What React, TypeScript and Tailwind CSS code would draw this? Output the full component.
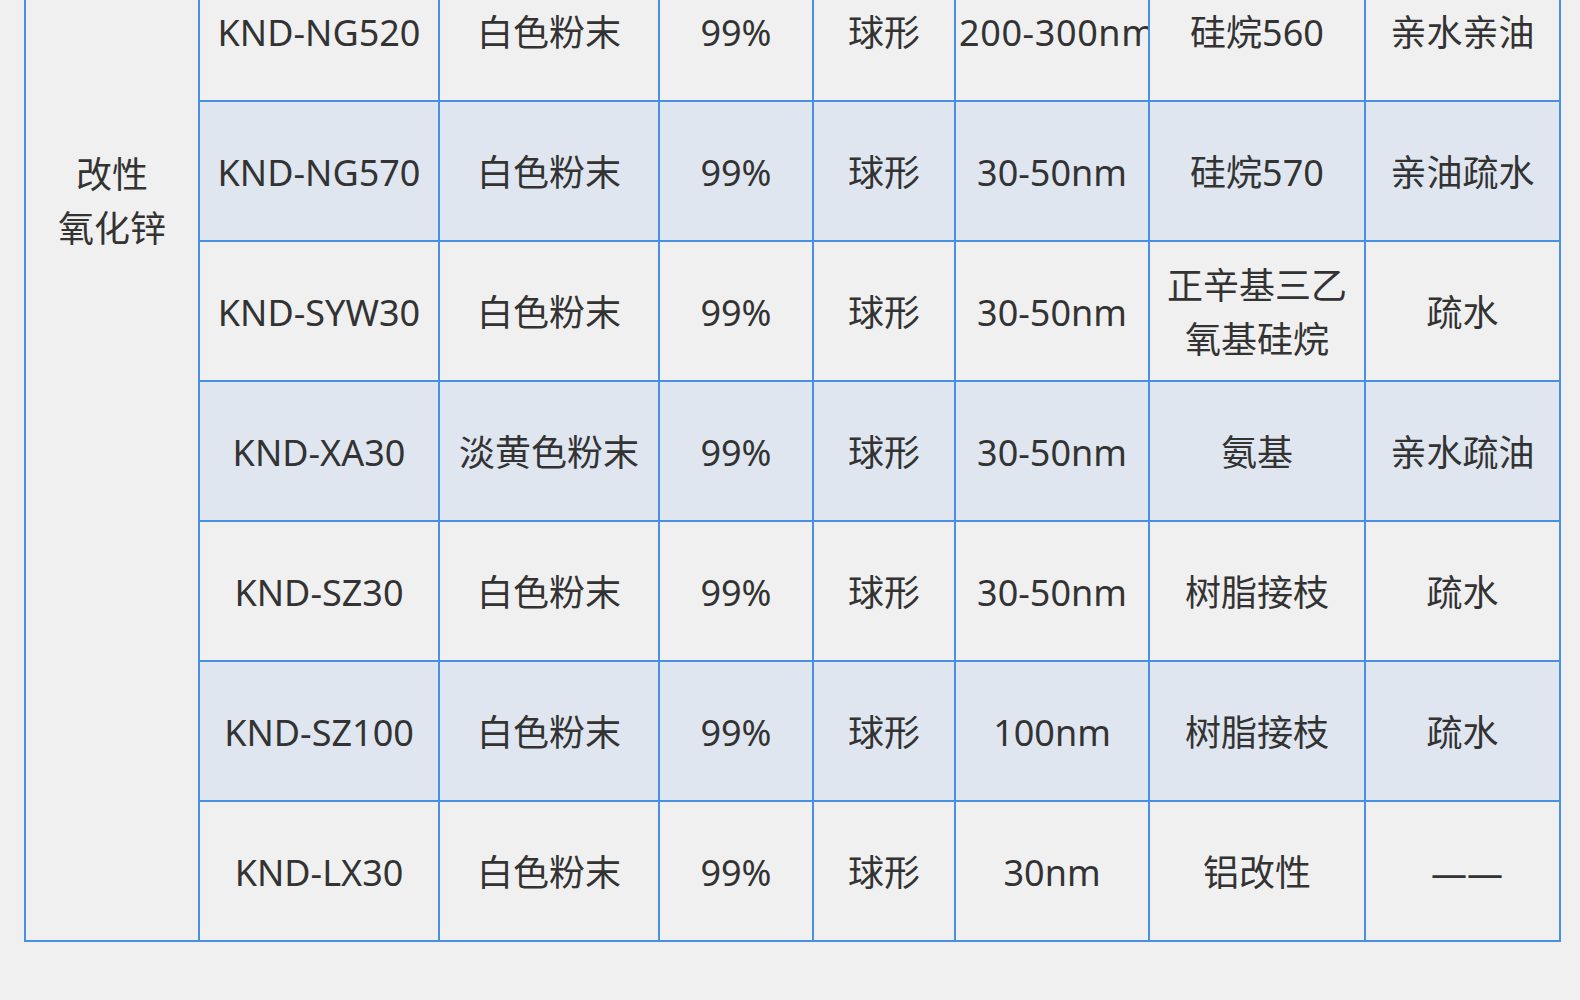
const rows = [
  ["KND-NG520", "白色粉末", "99%", "球形", "200-300nm", "硅烷560", "亲水亲油"],
  ["KND-NG570", "白色粉末", "99%", "球形", "30-50nm", "硅烷570", "亲油疏水"],
  ["KND-SYW30", "白色粉末", "99%", "球形", "30-50nm", "正辛基三乙氧基硅烷", "疏水"],
  ["KND-XA30", "淡黄色粉末", "99%", "球形", "30-50nm", "氨基", "亲水疏油"],
  ["KND-SZ30", "白色粉末", "99%", "球形", "30-50nm", "树脂接枝", "疏水"],
  ["KND-SZ100", "白色粉末", "99%", "球形", "100nm", "树脂接枝", "疏水"],
  ["KND-LX30", "白色粉末", "99%", "球形", "30nm", "铝改性", "——"],
];

const App = () => {
  return (
    <div
      className="min-h-screen bg-[#f0f0f0] overflow-hidden text-[#333] text-[36px] leading-[54px]"
      style={{ fontFamily: '"Noto Sans", "Noto Sans CJK SC", sans-serif' }}
    >
      <div className="ml-[24px] -mt-[40px] w-[1537px] bg-[#4a90e2] p-[2px] grid grid-cols-[172px_238px_218px_152px_140px_192px_214px_193px] auto-rows-[138px] gap-[2px]">
        <div className="row-span-7 bg-[#f0f0f0] flex flex-col items-center pt-[186px] text-center">
          改性
          <br />
          氧化锌
        </div>
        {rows.map((row, i) =>
          row.map((cell, j) => (
            <div
              key={`${i}-${j}`}
              className={`flex items-center justify-center text-center overflow-hidden px-[3px] pt-[3px] ${
                i % 2 === 1 ? "bg-[#dfe6ef]" : "bg-[#f0f0f0]"
              } ${cell === "——" ? "pl-[12px]" : ""}`}
            >
              <span
                className={
                  cell.length > 8 && cell.endsWith("nm")
                    ? "whitespace-nowrap w-full text-left tracking-[0.6px]"
                    : ""
                }
              >
                {cell}
              </span>
            </div>
          ))
        )}
      </div>
    </div>
  );
};

export default App;
